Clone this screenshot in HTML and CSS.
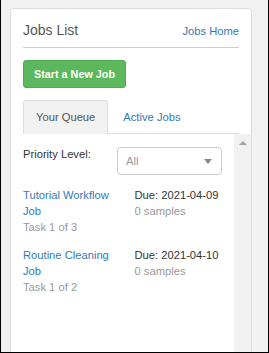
FILE: index.html
```html
<!DOCTYPE html>
<html>
<head>
<meta charset="utf-8">
<link rel="stylesheet" href="styles.css">
</head>
<body>
<div class="frame">
  <div class="panel">
    <div class="panel-head">
      <span class="title">Jobs List</span>
      <a class="link" href="#">Jobs Home</a>
    </div>
    <div class="rule"></div>
    <div class="actions">
      <a class="btn-success" href="#">Start a New Job</a>
    </div>
    <div class="tabs">
      <span class="tab active">Your Queue</span>
      <a class="tab link" href="#">Active Jobs</a>
    </div>
    <div class="tab-content">
      <div class="pane">
        <div class="filter-row">
          <span class="label">Priority Level:</span>
          <div class="select"><span class="placeholder">All</span><span class="caret"></span></div>
        </div>
        <div class="job">
          <div class="job-col">
            <a class="link" href="#">Tutorial Workflow Job</a>
            <div class="muted">Task 1 of 3</div>
          </div>
          <div class="job-col">
            <div class="due">Due: 2021-04-09</div>
            <div class="muted">0 samples</div>
          </div>
        </div>
        <div class="job">
          <div class="job-col">
            <a class="link" href="#">Routine Cleaning Job</a>
            <div class="muted">Task 1 of 2</div>
          </div>
          <div class="job-col">
            <div class="due">Due: 2021-04-10</div>
            <div class="muted">0 samples</div>
          </div>
        </div>
      </div>
      <div class="scrollbar"><span class="arrow-up"></span></div>
    </div>
  </div>
</div>
</body>
</html>
```

FILE: styles.css
```css
html, body {
  margin: 0;
  padding: 0;
}
body {
  font-family: "Liberation Sans", Arial, sans-serif;
  font-size: 11.2px;
  line-height: 16px;
  color: #333;
}
.frame {
  box-sizing: border-box;
  width: 269px;
  height: 353px;
  border-left: 1px solid #000;
  border-right: 1px solid #000;
  border-bottom: 1px solid #000;
  background: #f1f1f1;
  padding: 8px 0 0 9px;
  overflow: hidden;
}
.panel {
  box-sizing: border-box;
  width: 242px;
  min-height: 420px;
  background: #fff;
  border: 1px solid #ddd;
  border-radius: 4px;
  padding: 11px 12px 0;
  display: flex;
  flex-direction: column;
}
.link {
  color: #337ab7;
  text-decoration: none;
}
.panel-head {
  display: flex;
  justify-content: space-between;
  align-items: baseline;
  height: 20px;
}
.title {
  font-size: 14px;
  line-height: 20px;
  color: #555;
}
.rule {
  height: 1px;
  background: #d0d0d0;
  margin-top: 7px;
}
.actions {
  margin-top: 12px;
  display: flex;
}
.btn-success {
  display: block;
  font-weight: bold;
  font-size: 10.8px;
  line-height: 16px;
  color: #fff;
  text-decoration: none;
  background: #5cb85c;
  border: 1px solid #4cae4c;
  border-radius: 3px;
  padding: 5px 10px;
}
.tabs {
  margin-top: 12px;
  display: flex;
  border-bottom: 1px solid #ddd;
}
.tab {
  display: block;
  padding: 8px 12px;
  border: 1px solid transparent;
  border-radius: 3px 3px 0 0;
  margin-right: 2px;
  margin-bottom: -1px;
}
.tab.active {
  background: #f2f2f2;
  color: #555;
  border-color: #ddd;
  border-bottom-color: transparent;
}
.tab-content {
  flex: 1;
  display: flex;
  margin: 0 -12px;
}
.pane {
  flex: 1;
  padding: 12px 12px 0;
}
.scrollbar {
  width: 17px;
  background: #f1f1f1;
  display: flex;
  flex-direction: column;
  align-items: center;
}
.arrow-up {
  width: 0;
  height: 0;
  border-left: 4px solid transparent;
  border-right: 4px solid transparent;
  border-bottom: 4px solid #a3a3a3;
  margin-top: 7px;
}
.filter-row {
  display: grid;
  grid-template-columns: 94px 1fr;
  align-items: start;
}
.select {
  box-sizing: border-box;
  height: 28px;
  margin-top: 1px;
  border: 1px solid #ccc;
  border-radius: 4px;
  padding: 0 9px 0 8px;
  display: flex;
  align-items: center;
  justify-content: space-between;
}
.placeholder {
  color: #999;
}
.caret {
  width: 0;
  height: 0;
  border-left: 4px solid transparent;
  border-right: 4px solid transparent;
  border-top: 5px solid #888;
}
.job {
  margin-top: 12px;
  display: grid;
  grid-template-columns: 1fr 1fr;
  column-gap: 24px;
}
.job-col .link {
  display: block;
}
.muted {
  color: #999;
}
```
